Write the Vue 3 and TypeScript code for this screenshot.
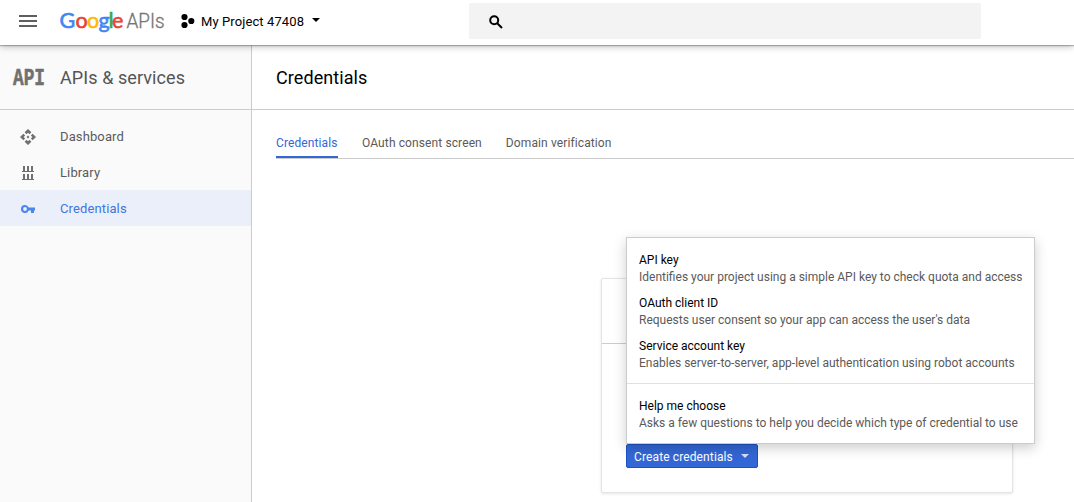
<script setup lang="ts">
interface NavItem { label: string; icon: 'dashboard' | 'library' | 'key'; active?: boolean }
interface Option { title: string; text: string; divided?: boolean }

const logo: { ch: string; color: string; x: number }[] = [
  { ch: 'G', color: '#4285f4', x: -0.4 },
  { ch: 'o', color: '#ea4335', x: 15.6 },
  { ch: 'o', color: '#fbbc05', x: 27 },
  { ch: 'g', color: '#4285f4', x: 38.6 },
  { ch: 'l', color: '#34a853', x: 48.4 },
  { ch: 'e', color: '#ea4335', x: 52 },
]
const nav: NavItem[] = [
  { label: 'Dashboard', icon: 'dashboard' },
  { label: 'Library', icon: 'library' },
  { label: 'Credentials', icon: 'key', active: true },
]
const tabs: string[] = ['Credentials', 'OAuth consent screen', 'Domain verification']
const options: Option[] = [
  { title: 'API key', text: 'Identifies your project using a simple API key to check quota and access' },
  { title: 'OAuth client ID', text: "Requests user consent so your app can access the user's data" },
  { title: 'Service account key', text: 'Enables server-to-server, app-level authentication using robot accounts' },
  { title: 'Help me choose', text: 'Asks a few questions to help you decide which type of credential to use', divided: true },
]
</script>

<template>
  <div class="app">
    <header class="topbar">
      <button class="burger" aria-label="Menu"><i></i><i></i><i></i></button>
      <svg class="logo" width="108" height="28" viewBox="0 0 108 28">
        <text class="google" y="19.8"><tspan v-for="(l, i) in logo" :key="i" :x="l.x" :fill="l.color" :stroke="l.color">{{ l.ch }}</tspan></text>
        <text class="apis" x="66.5" y="19.8" textLength="38" lengthAdjust="spacingAndGlyphs">APIs</text>
      </svg>
      <div class="project">
        <svg width="14" height="16" viewBox="0 0 14 16">
          <circle cx="3.5" cy="4" r="3.1" /><circle cx="10.3" cy="8" r="3.1" /><circle cx="3.5" cy="12" r="3.1" />
        </svg>
        <span>My Project 47408</span>
        <i class="caret"></i>
      </div>
      <div class="search">
        <svg width="14" height="14" viewBox="0 0 14 14" fill="none" stroke="#000" stroke-width="2">
          <circle cx="5.2" cy="5.2" r="4" /><path d="M8.2 8.2L13 13" />
        </svg>
      </div>
    </header>

    <div class="body">
      <aside class="sidebar">
        <div class="product">
          <svg class="mark" width="36" height="24" viewBox="0 0 36 24">
            <text class="api-mark" x="1" y="19.6" textLength="32" lengthAdjust="spacingAndGlyphs">API</text>
          </svg>
          <span>APIs &amp; services</span>
        </div>
        <nav>
          <a v-for="n in nav" :key="n.label" class="nav-item" :class="{ active: n.active }">
            <svg v-if="n.icon === 'dashboard'" width="16" height="16" viewBox="1 1 22 22" fill="currentColor">
              <path d="M14 12l-2 2-2-2 2-2 2 2zm-2-6l2.120 2.120 2.500-2.500L12 1 7.380 5.620l2.500 2.500L12 6zm-6 6l2.120-2.120-2.500-2.500L1 12l4.620 4.620 2.500-2.500L6 12zm12 0l-2.120 2.120 2.500 2.500L23 12l-4.620-4.620-2.500 2.500L18 12zm-6 6l-2.120-2.120-2.500 2.500L12 23l4.620-4.620-2.500-2.500L12 18z" />
            </svg>
            <svg v-else width="16" height="16" viewBox="0 0 16 16" fill="currentColor">
              <path v-if="n.icon === 'library'" d="M3 1h2v5H3zM7 1h2v5H7zM11 1h2v5h-2zM2 6h12v1H2zM3 9h2v5H3zM7 9h2v5H7zM11 9h2v5h-2zM2 14h12v1H2z" />
              <path v-else fill-rule="evenodd" d="M5 4a4 4 0 1 0 3.700 5.400H11V12h3V9.400h1V6.600H8.700A4 4 0 0 0 5 4zm0 2.100a1.900 1.900 0 1 1 0 3.800 1.900 1.900 0 0 1 0-3.800z" />
            </svg>
            <span>{{ n.label }}</span>
          </a>
        </nav>
      </aside>

      <main>
        <h1>Credentials</h1>
        <div class="tabs">
          <a v-for="(t, i) in tabs" :key="t" :class="{ active: i === 0 }">{{ t }}</a>
        </div>
        <section class="card">
          <div class="card-head"></div>
          <div class="card-body">
            <div class="dropdown">
              <button class="create">Create credentials<i class="caret"></i></button>
              <ul class="menu">
                <li v-for="o in options" :key="o.title" :class="{ divided: o.divided }">
                  <strong>{{ o.title }}</strong>
                  <span>{{ o.text }}</span>
                </li>
              </ul>
            </div>
          </div>
        </section>
      </main>
    </div>
  </div>
</template>

<style>
body { margin: 0; overflow: hidden; background: #fff; }
</style>

<style scoped>
* { box-sizing: border-box; }
.app { height: 502px; display: flex; flex-direction: column; font-family: Roboto, sans-serif; font-size: 13px; color: #000; overflow: hidden; }
button { font: inherit; border: 0; padding: 0; background: none; }
svg { display: block; flex: none; }
.topbar { height: 45px; flex: none; position: relative; z-index: 2; display: flex; align-items: flex-start; background: #fff; box-shadow: 0 1px 1px rgba(0,0,0,.24), 0 0 8px rgba(0,0,0,.38); }
.burger { width: 18px; height: 12px; margin: 15px 0 0 19px; display: flex; flex-direction: column; justify-content: space-between; }
.burger i { display: block; width: 18px; height: 2px; background: #5f5f5f; }
.logo { margin: 8px 0 0 23px; overflow: visible; }
.google { font-family: Lato, sans-serif; font-size: 21.500px; font-weight: 400; stroke-width: .6px; }
.apis { font-family: Roboto, sans-serif; font-size: 19.500px; font-weight: 300; fill: #757575; stroke: #757575; stroke-width: .35px; }
.project { margin: 12px 0 0 13px; height: 18px; width: 140px; display: flex; align-items: center; white-space: nowrap; }
.project span { margin-left: 6px; letter-spacing: .1px; }
.caret { display: block; border: 4px solid transparent; border-top-color: currentColor; border-bottom: 0; }
.project .caret { margin: -3px 0 0 8px; }
.search { width: 512px; height: 36px; margin: 3px 0 0 148px; background: #f3f3f3; border-radius: 2px; padding: 12px 0 0 20px; }
.body { flex: 1; display: flex; min-height: 0; }
.sidebar { width: 252px; flex: none; background: #fafafa; border-right: 1px solid #ccc; }
.product { height: 65px; border-bottom: 1px solid #ccc; display: flex; align-items: center; padding-left: 12px; font-size: 18px; color: #555; letter-spacing: .08px; }
.product span { margin-left: 12px; }
.mark { overflow: visible; }
.api-mark { font-family: "Liberation Mono", monospace; font-size: 24.500px; font-weight: 700; letter-spacing: 0; fill: #707070; stroke: #707070; stroke-width: .6px; }
nav { padding-top: 8px; }
.nav-item { height: 36px; display: flex; align-items: center; padding: 1px 0 0 20px; color: #5a5a5a; letter-spacing: .12px; }
.nav-item svg { color: #707070; }
.nav-item span { margin-left: 24px; }
.nav-item.active { color: #4175df; background: #ebeff9; }
.nav-item.active svg { color: #4a86ee; }
main { flex: 1; min-width: 0; }
h1 { margin: 0; height: 65px; padding-left: 24px; border-bottom: 1px solid #ccc; font-size: 18px; font-weight: 400; line-height: 65px; letter-spacing: .08px; }
.tabs { margin: 17px 0 0 24px; height: 32px; border-bottom: 1px solid #ccc; display: flex; gap: 24px; font-size: 12px; color: #5a5a5a; letter-spacing: .11px; }
.tabs a { height: 31px; line-height: 32px; white-space: nowrap; }
.tabs .active { width: 62px; color: #3367d6; border-bottom: 2px solid #3367d6; }
.card { width: 412px; height: 215px; margin: 119px 0 0 349px; background: #fff; border: 1px solid #e4e4e4; border-radius: 2px; box-shadow: 0 1px 3px rgba(0,0,0,.1); }
.card-head { height: 65px; border-bottom: 1px solid #ccc; }
.card-body { padding: 100px 0 0 24px; }
.dropdown { position: relative; width: 132px; }
.create { width: 132px; height: 24px; display: flex; align-items: center; padding: 1px 0 0 7px; font-size: 12px; letter-spacing: .12px; color: #fff; background: #3367d6; border: 1px solid #1a53c4; border-radius: 2px; white-space: nowrap; }
.create .caret { margin-left: 8px; margin-top: -2px; opacity: .8; }
.menu { position: absolute; left: 0; bottom: 24px; width: 409px; height: 207px; margin: 0; padding: 14px 0 0; list-style: none; background: #fff; border: 1px solid #ccc; box-shadow: 0 4px 12px rgba(0,0,0,.2); font-size: 12px; line-height: 17px; }
.menu li { height: 43px; padding-left: 12px; white-space: nowrap; }
.menu li.divided { margin-top: 2px; padding-top: 14px; height: 59px; border-top: 1px solid #e0e0e0; }
.menu strong, .menu span { display: block; font-weight: 400; }
.menu span { color: #5a5a5a; }
</style>
